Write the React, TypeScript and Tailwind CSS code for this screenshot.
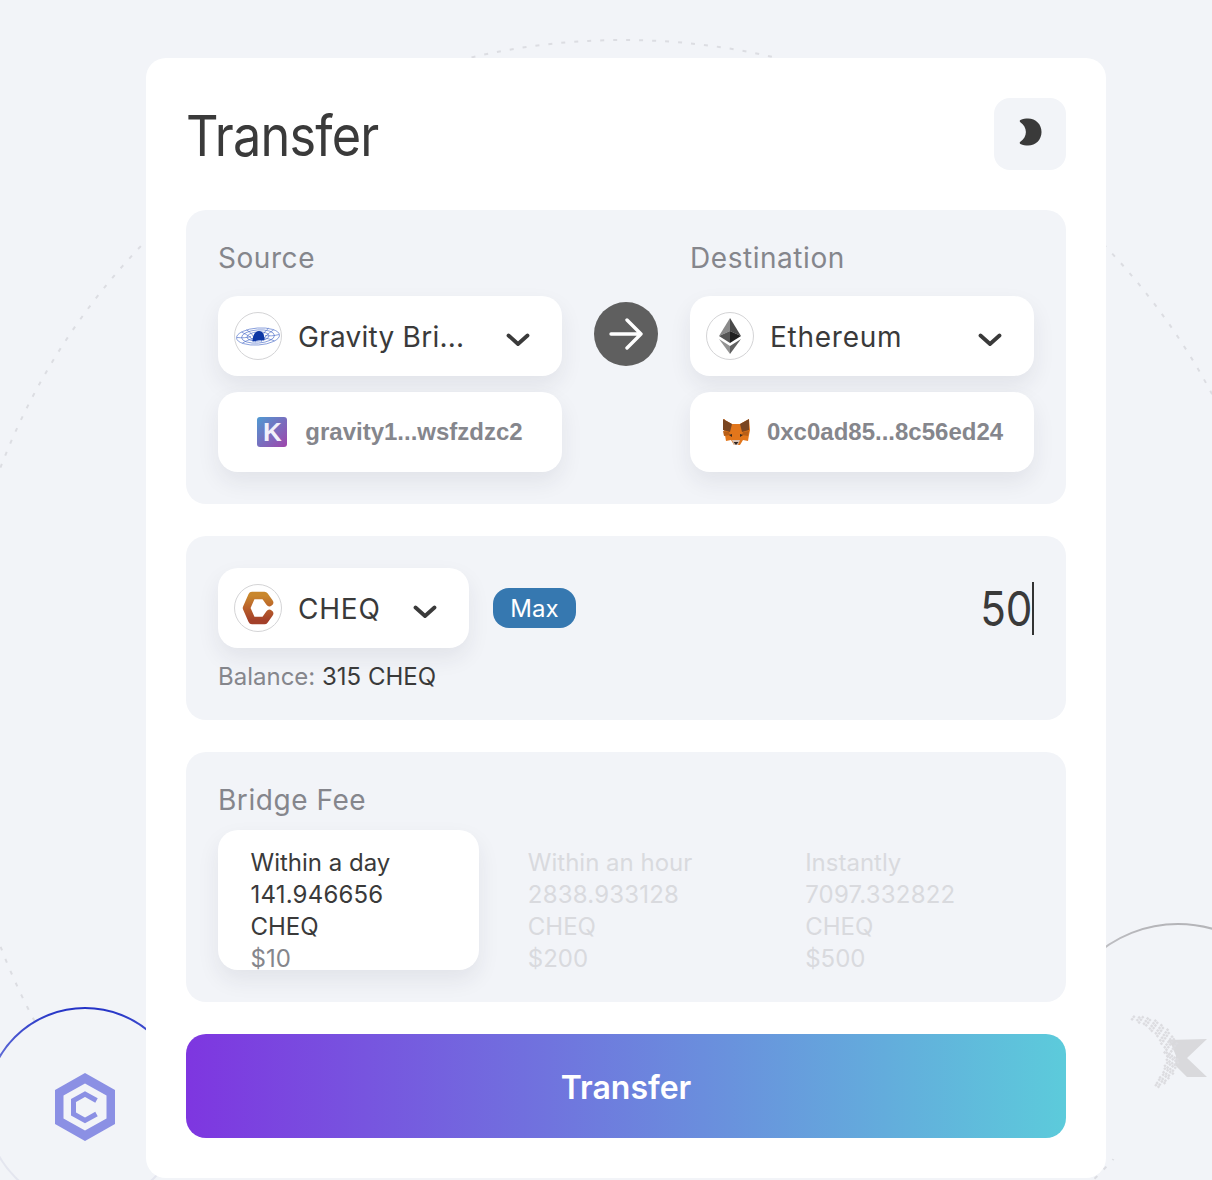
import { ReactNode } from "react";

const panelClass = "rounded-[20px] bg-[#f2f4f8] p-8";
const whiteBox = "rounded-[20px] bg-white shadow-[0_10px_22px_rgba(40,40,70,0.08)]";

const Chevron = () => (
  <svg width="24" height="14" viewBox="0 0 24 14" fill="none" className="shrink-0">
    <path d="M2.500 2.500L12 11l9.500-8.500" stroke="#3a3a3a" strokeWidth="3.800" strokeLinecap="round" strokeLinejoin="round" />
  </svg>
);

// round white holder with thin border that all the chain / token logos sit in
const IconCircle = ({ children }: { children: ReactNode }) => (
  <div className="h-12 w-12 shrink-0 rounded-full border border-[#d4d4d6] bg-white">
    <svg width="46" height="46" viewBox="1 1 46 46">{children}</svg>
  </div>
);

const GravityIcon = () => (
  <IconCircle>
    <g fill="none" stroke="#3f63c4" strokeWidth="0.6" transform="rotate(-4 24 24.500)">
      <ellipse cx="24" cy="24.500" rx="21.500" ry="8.500" />
      <ellipse cx="24" cy="24.500" rx="16.500" ry="6.600" />
      <ellipse cx="24" cy="24.500" rx="11" ry="4.600" />
      <path d="M8 19c5 3 9 5 11 10M13 17c4 3 7 6 8 13M40 19c-5 3-9 5-11 10M35 17c-4 3-7 6-8 13M3 24c5 1 10 1 14 0M45 24c-5 1-10 1-14 0M8 30c4-2 7-3 11-4M40 30c-4-2-7-3-11-4" />
    </g>
    <path d="M18.500 29.500c0-6 2.500-10.500 6.500-10.500s5.500 4 5.500 9c-4.500 0-8 .5-12 1.500z" fill="#0d37a5" />
  </IconCircle>
);

const EthIcon = () => (
  <IconCircle>
    <path d="M24 6L13 24l11-5z" fill="#8a8a8a" />
    <path d="M24 6l11 18-11-5z" fill="#4a4a4a" />
    <path d="M13 24l11-5v12z" fill="#555" />
    <path d="M35 24l-11-5v12z" fill="#1f1f1f" />
    <path d="M13 27l11 15v-8z" fill="#939393" />
    <path d="M35 27L24 42v-8z" fill="#616161" />
  </IconCircle>
);

const CheqIcon = () => (
  <IconCircle>
    <defs>
      <linearGradient id="cheq" x1="0" y1="0" x2="0" y2="1">
        <stop offset="0" stopColor="#c9872c" />
        <stop offset="0.5" stopColor="#b9602a" />
        <stop offset="1" stopColor="#a3402a" />
      </linearGradient>
    </defs>
    <path d="M35.500 18.500L30.500 11.500H18L12.500 24 18 36.500H30.500L35.500 29.500" fill="none" stroke="url(#cheq)" strokeWidth="7.500" strokeLinejoin="round" strokeLinecap="round" />
  </IconCircle>
);

const KeplrIcon = () => (
  <div className="flex h-[30px] w-[30px] shrink-0 items-center justify-center rounded-[3px] bg-linear-to-br/srgb from-[#4f9ad2] to-[#a044ab] font-['Liberation_Sans',sans-serif] text-[26px] font-bold leading-none text-[#f1f0fa]">
    K
  </div>
);

const FoxIcon = () => (
  <svg width="30" height="28" viewBox="0 0 30 28" className="shrink-0">
    <path d="M2 1l9 5h8l9-5 1 11-1 5-1 6-5-1-3 5h-6l-3-5-5 1-1-6-1-5 1-11z" fill="#e2761b" />
    <path d="M2 1l9 5-2 8-7-2zM28 1l-9 5 2 8 7-2z" fill="#7a4521" />
    <path d="M2 13l6 1 1 3-6 1zM28 13l-6 1-1 3 6 1z" fill="#b85f17" />
    <path d="M11 16l-3 1 3 2zM19 16l3 1-3 2z" fill="#3b2a1e" />
    <path d="M11 22h8l-2 5h-4z" fill="#d7c1b3" />
    <path d="M12.500 24h5l-2.500 3z" fill="#2d2520" />
  </svg>
);

const Moon = () => (
  <svg width="23" height="28" viewBox="0 0 24 29" className="mb-1 shrink-0">
    <path
      d="M1.500 2C4 .8 7 .4 9.500.4 17.500.4 23.500 6.500 23.500 14.500S17.500 28.600 9.500 28.600c-2.600 0-5.500-.5-8-1.700-1-.5-1-1.600-.1-2.200C5 22.300 7.200 18.600 7.200 14.500S5 6.700 1.400 4.200C.5 3.600.5 2.500 1.500 2z"
      fill="#3a3a3a"
    />
  </svg>
);

const SelectBox = ({ icon, label, width, tracking }: { icon: ReactNode; label: string; width: string; tracking: string }) => (
  <div className={`${whiteBox} ${width} flex h-20 items-center pl-4 pr-8`}>
    {icon}
    <span className={`${tracking} ml-4 mt-0.5 text-[28px] leading-8 text-[#3a3a3a]`}>{label}</span>
    <span className="ml-auto mt-2">
      <Chevron />
    </span>
  </div>
);

const AddressBox = ({ icon, address, gap }: { icon: ReactNode; address: string; gap: string }) => (
  <div className={`${whiteBox} ${gap} mt-4 flex h-20 w-[344px] items-center justify-center`}>
    {icon}
    <span className="font-['Liberation_Sans',sans-serif] text-[24px] font-bold text-[#85868c]">{address}</span>
  </div>
);

const FeeOption = ({ time, amount, usd, active }: { time: string; amount: string; usd: string; active?: boolean }) => (
  <div
    className={`h-[140px] overflow-hidden px-[32.5px] pt-[17px] text-[24px] leading-8 ${
      active ? `${whiteBox} text-[#3a3a3a]` : "text-[#d9dade]"
    }`}
  >
    <div>{time}</div>
    <div>
      <span className="tracking-[0.2px]">{amount}</span> CHEQ
    </div>
    <div className={active ? "text-[#85868c]" : ""}>{usd}</div>
  </div>
);

// dotted rings and the two corner logos behind the card
const Backdrop = () => {
  const dots: { x: number; y: number; r: number }[] = [];
  for (let i = 0; i < 14; i++) {
    const t = i / 13;
    const mt = 1 - t;
    const rows = 2 + Math.round(t * 4);
    for (let row = 0; row < rows; row++) {
      const off = (row - (rows - 1) / 2) * 3.3;
      dots.push({
        x: mt * mt * 1133 + 2 * mt * t * 1160 + t * t * 1171 + off * 0.55 + (i % 2) * 1.2,
        y: mt * mt * 1018 + 2 * mt * t * 1022 + t * t * 1050 - off * 0.8,
        r: 45,
      });
    }
  }
  for (let i = 0; i < 12; i++) {
    const t = i / 11;
    const mt = 1 - t;
    const rows = 5 - Math.round(t * 3);
    for (let row = 0; row < rows; row++) {
      const off = (row - (rows - 1) / 2) * 3.3;
      dots.push({
        x: mt * mt * 1172 + 2 * mt * t * 1170 + t * t * 1156 + off * 0.8 + (i % 2) * 1.2,
        y: mt * mt * 1056 + 2 * mt * t * 1074 + t * t * 1086 + off * 0.5,
        r: 45,
      });
    }
  }
  return (
    <svg width="1212" height="1180" viewBox="0 0 1212 1180" fill="none" className="absolute left-0 top-0">
      <defs>
        <linearGradient id="ringBlue" gradientUnits="userSpaceOnUse" x1="85" y1="1008" x2="85" y2="1206">
          <stop offset="0" stopColor="#2433c6" />
          <stop offset="0.3" stopColor="#6d78da" />
          <stop offset="0.7" stopColor="#e4e6ef" />
          <stop offset="1" stopColor="#e4e6ef" />
        </linearGradient>
        <linearGradient id="ringGrey" gradientUnits="userSpaceOnUse" x1="1178" y1="924" x2="1178" y2="1176">
          <stop offset="0" stopColor="#b4b4b8" />
          <stop offset="0.25" stopColor="#d0d1d5" />
          <stop offset="0.6" stopColor="#f2f4f8" />
          <stop offset="1" stopColor="#f2f4f8" />
        </linearGradient>
      </defs>
      <circle cx="623" cy="707" r="667" stroke="#dcdde2" strokeWidth="2" strokeDasharray="4 9" />
      <circle cx="85" cy="1107" r="99" fill="#f2f4f8" stroke="url(#ringBlue)" strokeWidth="2" />
      <circle cx="1178" cy="1050" r="126" fill="#f2f4f8" stroke="url(#ringGrey)" strokeWidth="2" />
      <path d="M85 1073l30 17v34l-30 17-30-17v-34z M85 1083.500l-21.500 12v23l21.500 12 21.500-12v-23z" fill="#8b90e4" fillRule="evenodd" />
      <path d="M96.500 1100.500L85 1094l-11.500 6.500v13.500L85 1120.500l11.500-6.500" stroke="#8b90e4" strokeWidth="5" />
      <path d="M1168 1040l39-1-20 19 20 19h-20l-12-12 1-9-4-10z" fill="#d9d9dc" />
      {dots.map((d, i) => (
        <rect
          key={i}
          x={d.x - 1.2}
          y={d.y - 1.2}
          width="2.400"
          height="2.400"
          fill="#dcdce0"
          transform={`rotate(${d.r} ${d.x} ${d.y})`}
        />
      ))}
    </svg>
  );
};

export default function App() {
  return (
    <div className="relative h-[1180px] overflow-hidden bg-[#f2f4f8] pt-[58px] pl-[146px] font-[Inter,sans-serif]">
      <Backdrop />

      <div className="relative h-[1120px] w-[960px] rounded-[20px] bg-white px-10 pt-10">
        <div className="flex h-[72px] items-center justify-between">
          <h1 className="mt-1 origin-left scale-x-[0.9] text-[56px] font-normal leading-none tracking-[-0.9px] text-[#3a3a3a]">Transfer</h1>
          <button className="flex h-[72px] w-[72px] items-center justify-center rounded-2xl bg-[#f2f4f8]">
            <Moon />
          </button>
        </div>

        {/* source / destination */}
        <div className={`${panelClass} mt-10 flex gap-8`}>
          <div>
            <div className="mb-[22px] text-[28px] leading-8 tracking-[0.55px] text-[#85868c]">Source</div>
            <SelectBox icon={<GravityIcon />} label="Gravity Bri..." width="w-[344px]" tracking="tracking-[0.25px]" />
            <AddressBox icon={<KeplrIcon />} address="gravity1...wsfzdzc2" gap="gap-[18px]" />
          </div>
          <div className="pt-[60px]">
            <div className="flex h-16 w-16 items-center justify-center rounded-full bg-[#5f5f5f]">
              <svg width="34" height="32" viewBox="0 0 34 32" fill="none">
                <path d="M2 16h30M18 2l14 14-14 14" stroke="#fff" strokeWidth="3.400" strokeLinecap="round" strokeLinejoin="round" />
              </svg>
            </div>
          </div>
          <div>
            <div className="mb-[22px] text-[28px] leading-8 tracking-[0.55px] text-[#85868c]">Destination</div>
            <SelectBox icon={<EthIcon />} label="Ethereum" width="w-[344px]" tracking="tracking-[0.75px]" />
            <AddressBox icon={<FoxIcon />} address="0xc0ad85...8c56ed24" gap="gap-4" />
          </div>
        </div>

        {/* token and amount */}
        <div className={`${panelClass} mt-8 flex h-[184px] justify-between`}>
          <div>
            <div className="flex items-center">
              <SelectBox icon={<CheqIcon />} label="CHEQ" width="w-[251px]" tracking="tracking-[0.8px]" />
              <button className="ml-6 h-10 w-[83px] rounded-2xl bg-[#3678b0] pt-0.5 text-[24px] leading-8 text-white">Max</button>
            </div>
            <div className="mt-[13px] text-[24px] leading-8 text-[#85868c]">
              Balance: <span className="text-[#3a3a3a]">315 CHEQ</span>
            </div>
          </div>
          <div className="mt-3.5 flex h-[53px] items-center border-r-2 border-[#333] text-[48px] leading-none text-[#3a3a3a]">
            <span className="origin-right scale-x-[0.88]">50</span>
          </div>
        </div>

        {/* bridge fee */}
        <div className={`${panelClass} mt-8`}>
          <div className="mb-3.5 text-[28px] leading-8 tracking-[0.55px] text-[#85868c]">Bridge Fee</div>
          <div className="grid grid-cols-3 gap-4">
            <FeeOption time="Within a day" amount="141.946656" usd="$10" active />
            <FeeOption time="Within an hour" amount="2838.933128" usd="$200" />
            <FeeOption time="Instantly" amount="7097.332822" usd="$500" />
          </div>
        </div>

        <button className="mt-8 h-[104px] w-full rounded-[20px] bg-linear-to-r/srgb from-[#7e36e0] to-[#5ccbdb] pt-1 text-[32px] font-semibold text-white">
          Transfer
        </button>
      </div>
    </div>
  );
}
